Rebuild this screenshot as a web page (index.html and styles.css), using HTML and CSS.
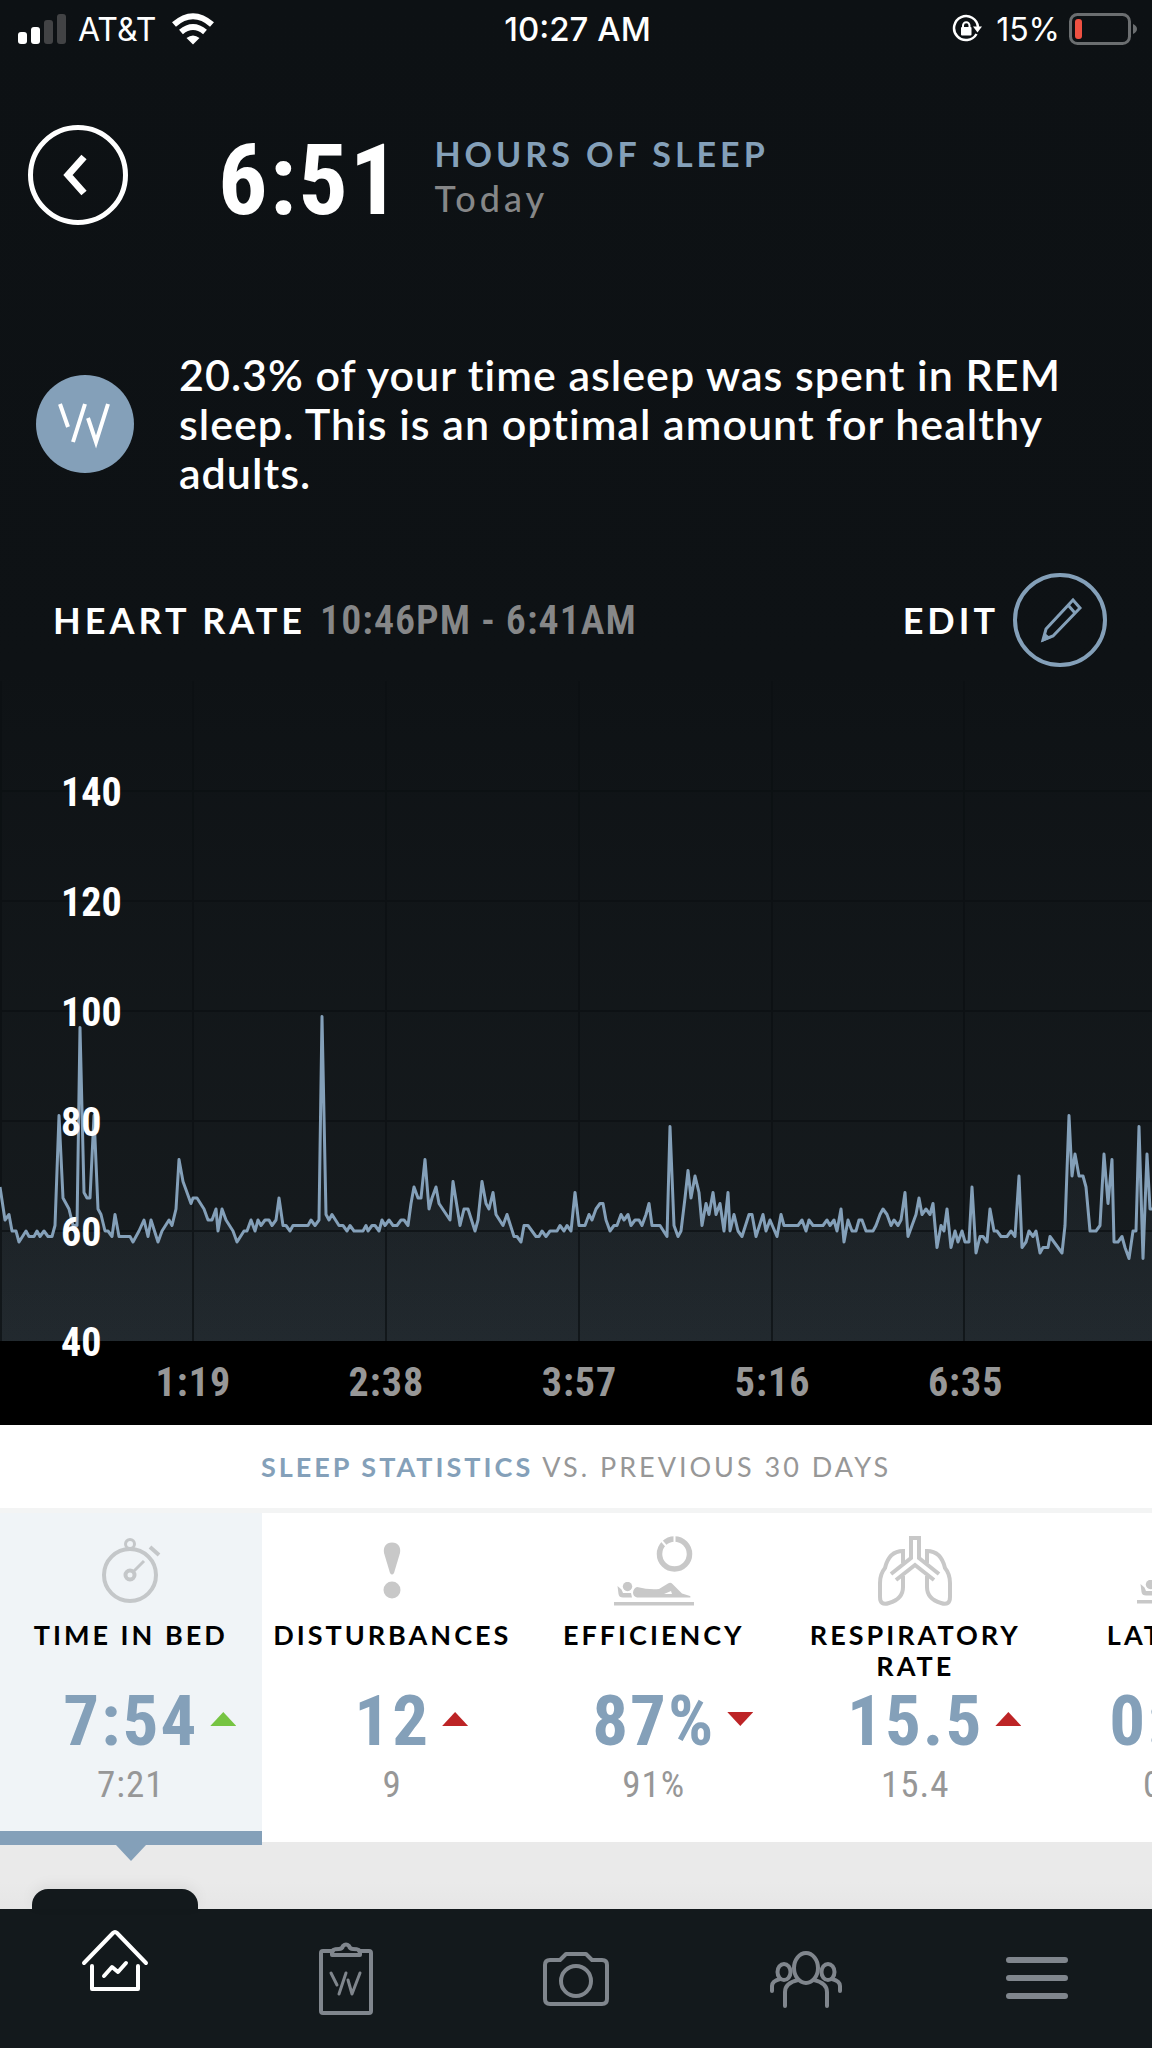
FILE: index.html
```
<!DOCTYPE html>
<html lang="en">
<head>
    <meta charset="UTF-8">
    <meta name="viewport" content="width=device-width, initial-scale=1">
    <title>Sleep</title>
    <link rel="stylesheet" href="styles.css">
</head>

<body>
    <!-- shared shapes -->
    <svg class="defs" width="0" height="0" aria-hidden="true">
        <symbol id="sleeper" viewBox="0 0 80 24">
            <circle cx="13.5" cy="4.5" r="4.7"/>
            <path d="M3.5 4L7.5 7.500L9 11H17L18 15.500H9Q5 15.500 4.500 12Z"/>
            <path fill-rule="evenodd" d="M23 5Q35 8 45 7L54 1.500Q56.500 0 58.500 2L68 11.500L76 14Q77.500 15.500 75 15.500H23Q19 14.500 19 10.500Q19.500 6 23 5ZM50 12L57 9L58 12Z"/>
            <rect x="0" y="20" width="80" height="3.500"/>
        </symbol>
    </svg>

    <div class="top">
        <div class="status">
            <div class="status-side">
                <svg width="50" height="32" viewBox="0 0 50 32">
                    <rect x="0" y="19" width="9" height="12" rx="3" fill="#fff"/>
                    <rect x="13" y="14" width="9" height="17" rx="3" fill="#fff"/>
                    <rect x="26" y="7" width="9" height="24" rx="3" fill="#424345"/>
                    <rect x="39" y="1" width="9" height="30" rx="3" fill="#424345"/>
                </svg>
                <span class="carrier">AT&amp;T</span>
                <svg width="44" height="32" viewBox="0 0 44 32" fill="none" stroke="#fff">
                    <path d="M3 11.500Q22 -5 41 11.500" stroke-width="6"/>
                    <path d="M10 19Q22 9 34 19" stroke-width="6"/>
                    <path d="M15.500 25Q22 20 28.500 25L22 31.500Z" fill="#fff" stroke="none"/>
                </svg>
            </div>
            <div class="status-time">10:27 AM</div>
            <div class="status-side right">
                <svg width="30" height="30" viewBox="0 0 30 30">
                    <path d="M24.500 20A12 12 0 1 1 26 13" fill="none" stroke="#fff" stroke-width="2.500"/>
                    <path d="M21 12.500H30L25.500 18.500Z" fill="#fff"/>
                    <rect x="9" y="13" width="10.500" height="8.500" rx="1" fill="#fff"/>
                    <path d="M11 13V11.500A3.200 3.200 0 0 1 17.500 11.500V13" fill="none" stroke="#fff" stroke-width="2"/>
                </svg>
                <span class="percent">15%</span>
                <svg width="68" height="32" viewBox="0 0 68 32">
                    <rect x="1.500" y="1.500" width="59" height="29" rx="7" fill="none" stroke="#6b6e70" stroke-width="3"/>
                    <rect x="6" y="6" width="7" height="20" rx="3" fill="#ef5142"/>
                    <path d="M64 11Q68 13 68 16Q68 19 64 21Z" fill="#6b6e70"/>
                </svg>
            </div>
        </div>

        <header class="header">
            <button class="back" aria-label="Back">
                <svg width="30" height="44" viewBox="0 0 30 44"><path d="M21 4L5 22L21 40" fill="none" stroke="#fff" stroke-width="7"/></svg>
            </button>
            <div class="hours">6:51</div>
            <div class="titles">
                <h1>HOURS OF SLEEP</h1>
                <div class="day">Today</div>
            </div>
        </header>

        <div class="insight">
            <svg class="logo" width="98" height="98" viewBox="0 0 98 98">
                <circle cx="49" cy="49" r="49" fill="#84a0b9"/>
                <path d="M24 29L32 52M49 29L37 67M52 43L60 67L72 29" fill="none" stroke="#fff" stroke-width="4"/>
            </svg>
            <p>20.3% of your time asleep was spent in REM sleep. This is an optimal amount for healthy adults.</p>
        </div>

        <div class="heart">
            <h2>HEART RATE</h2>
            <span class="range">10:46PM - 6:41AM</span>
            <button class="edit">
                EDIT
                <svg width="94" height="94" viewBox="0 0 94 94" fill="none" stroke="#84a0b9">
                    <circle cx="47" cy="47" r="45" stroke-width="4"/>
                    <path d="M30 67L33 56L60 27L67 35L40 63ZM55 32L62 40" stroke-width="3"/>
                    <path d="M29 69L32 60L38 65Z" fill="#84a0b9" stroke="none"/>
                </svg>
            </button>
        </div>

        <div class="chart">
            <svg viewBox="0 0 1152 660" preserveAspectRatio="none">
                <defs>
                    <linearGradient id="fill" x1="0" y1="0" x2="0" y2="1">
                        <stop offset="0" stop-color="#84a0b9" stop-opacity="0"/>
                        <stop offset="1" stop-color="#84a0b9" stop-opacity="0.100"/>
                    </linearGradient>
                </defs>
                <polygon id="area" fill="url(#fill)"/>
                <path d="M0 110H1152M0 220H1152M0 330H1152M0 440H1152M0 550H1152M1 0V660M193 0V660M386 0V660M579 0V660M772 0V660M964 0V660" stroke="#0c1013" stroke-opacity="0.700" stroke-width="2"/>
                <polyline id="line" fill="none" stroke="#84a0b9" stroke-width="3" stroke-linejoin="round"/>
            </svg>
            <div class="bpm">
                <span>140</span>
                <span>120</span>
                <span>100</span>
                <span>80</span>
                <span>60</span>
                <span>40</span>
            </div>
        </div>
    </div>

    <div class="times">
        <span>1:19</span>
        <span>2:38</span>
        <span>3:57</span>
        <span>5:16</span>
        <span>6:35</span>
    </div>

    <h3 class="stats-title"><b>SLEEP STATISTICS</b> VS. PREVIOUS 30 DAYS</h3>

    <div class="stats">
        <button class="card active">
            <svg class="icon" viewBox="0 0 80 72" fill="none" stroke="#c4c7c9">
                <circle cx="39" cy="40" r="26" stroke-width="4"/>
                <circle cx="39" cy="9" r="4.500" stroke-width="3"/>
                <circle cx="39" cy="40" r="4.500" stroke-width="4"/>
                <path d="M42 37L53 26" stroke-width="3"/>
                <path d="M59 12L68 20" stroke-width="4"/>
            </svg>
            <span class="label">TIME IN BED</span>
            <span class="value">7:54 <i class="up good"></i></span>
            <span class="prev">7:21</span>
        </button>
        <button class="card">
            <svg class="icon" viewBox="0 0 80 72" fill="#c8c8c8">
                <path d="M40 7.500C46 7.500 49 12 48 18L42 38Q40 41 38 38L32 18C31 12 34 7.500 40 7.500Z"/>
                <circle cx="40" cy="55" r="8.500"/>
            </svg>
            <span class="label">DISTURBANCES</span>
            <span class="value">12 <i class="up"></i></span>
            <span class="prev">9</span>
        </button>
        <button class="card">
            <svg class="icon" viewBox="0 0 80 72" fill="#c8c8c8">
                <circle cx="60.500" cy="19" r="15" fill="none" stroke="#c8c8c8" stroke-width="5.500"/>
                <path d="M60.500 10V0M53 12L46 4" stroke="#fff" stroke-width="2"/>
                <use href="#sleeper" y="47" width="80" height="24"/>
            </svg>
            <span class="label">EFFICIENCY</span>
            <span class="value">87% <i class="down"></i></span>
            <span class="prev">91%</span>
        </button>
        <button class="card">
            <svg class="icon" viewBox="0 0 80 72" fill="none" stroke="#c8c8c8" stroke-width="4">
                <path d="M16 39L36 23V3H44V23L64 39"/>
                <path d="M21 45L40 30L59 45"/>
                <path d="M28 28V16Q14 16 10 33Q5 39 5 48V62Q5 71 14 68Q28 64 28 52V41"/>
                <path d="M52 28V16Q66 16 70 33Q75 39 75 48V62Q75 71 66 68Q52 64 52 52V41"/>
            </svg>
            <span class="label">RESPIRATORY RATE</span>
            <span class="value">15.5 <i class="up"></i></span>
            <span class="prev">15.4</span>
        </button>
        <button class="card">
            <svg class="icon" viewBox="0 0 80 72" fill="#c8c8c8">
                <use href="#sleeper" y="45" width="80" height="24"/>
            </svg>
            <span class="label">LATENCY</span>
            <span class="value">0:04 <i class="up"></i></span>
            <span class="prev">0:03</span>
        </button>
    </div>

    <div class="gap"></div>

    <nav class="nav">
        <a href="#" class="current" aria-label="Home">
            <svg width="70" height="66" viewBox="0 0 70 66">
                <path d="M4 34L33 4Q35 2 37 4L66 34M12 37V60H58V37M24 47L32 38L38 43L46 34"/>
            </svg>
        </a>
        <a href="#" aria-label="Journal">
            <svg width="58" height="74" viewBox="0 0 58 74">
                <path d="M16 9H6Q4 9 4 11V69Q4 71 6 71H52Q54 71 54 69V11Q54 9 52 9H42"/>
                <path d="M15 13V10Q15 7 22 7Q25 7 26 4Q29 1 32 4Q33 7 36 7Q43 7 43 10V13Z"/>
                <path d="M14 31L20 43M29 31L22 52M31 38L35 52L43 31" stroke-width="3"/>
            </svg>
        </a>
        <a href="#" aria-label="Camera">
            <svg width="68" height="58" viewBox="0 0 68 58">
                <path d="M8 10H18L24 4H44L50 10H60Q65 10 65 15V49Q65 54 60 54H8Q3 54 3 49V15Q3 10 8 10Z"/>
                <circle cx="34" cy="31" r="15"/>
            </svg>
        </a>
        <a href="#" aria-label="Team">
            <svg width="74" height="58" viewBox="0 0 74 58">
                <ellipse cx="37" cy="18" rx="12" ry="15"/>
                <ellipse cx="15" cy="22" rx="6.500" ry="8"/>
                <ellipse cx="59" cy="22" rx="6.500" ry="8"/>
                <path d="M29 30Q16 33 16 42V56M45 30Q58 33 58 42V56M11 29Q3 31 3 36V41M63 29Q71 31 71 36V41"/>
            </svg>
        </a>
        <a href="#" aria-label="Menu">
            <svg width="64" height="46" viewBox="0 0 64 46">
                <path d="M4 4H60M4 22H60M4 40H60" stroke-width="6"/>
            </svg>
        </a>
    </nav>

    <script src="chart.js"></script>
</body>
</html>
```
FILE: styles.css
```
* {
    box-sizing: border-box;
}

body {
    margin: 0;
    min-height: 100vh;
    display: flex;
    flex-direction: column;
    background: #eaeaea;
    font-family: Lato, "Liberation Sans", sans-serif;
    color: #fff;
}

h1, h2, h3, p {
    margin: 0;
}

button {
    padding: 0;
    border: none;
    background: none;
    color: inherit;
    font: inherit;
    letter-spacing: inherit;
    cursor: pointer;
}

svg {
    display: block;
    flex: none;
}

.defs {
    position: absolute;
}

.top {
    background: linear-gradient(#0d1114, #0e1215 50%, #171c1f);
}

/* status bar */
.status {
    display: flex;
    align-items: center;
    height: 58px;
    padding: 0 15px 0 18px;
    font-family: Inter, Roboto, sans-serif;
    font-size: 32px;
}

.status-side {
    flex: 1;
    display: flex;
    align-items: center;
}

.status-side.right {
    justify-content: flex-end;
}

.carrier {
    margin: 0 15px 0 10px;
}

.percent {
    margin: 0 9px 0 14px;
}

.status-time {
    font-size: 33px;
    font-weight: 500;
}

/* header */
.header {
    display: flex;
    align-items: flex-start;
    margin-top: 67px;
    padding: 0 28px;
}

.back {
    display: flex;
    align-items: center;
    justify-content: center;
    width: 100px;
    height: 100px;
    border: 5px solid #fff;
    border-radius: 50%;
}

.hours {
    margin: 0 33px 0 90px;
    font: bold 98px/112px "Roboto Condensed", Roboto, sans-serif;
    letter-spacing: 2px;
}

.titles {
    margin-top: 7px;
    font-size: 36px;
    line-height: 44px;
    letter-spacing: 4px;
}

.titles h1 {
    font-size: 34px;
    font-weight: bold;
    color: #84a0b9;
}

.day {
    font-weight: 500;
    color: #868788;
}

/* insight */
.insight {
    display: flex;
    align-items: center;
    gap: 45px;
    margin-top: 113px;
    padding: 0 60px 0 36px;
    font-size: 43px;
    font-weight: 600;
    line-height: 49px;
    letter-spacing: 1px;
}

/* heart rate */
.heart {
    display: flex;
    align-items: center;
    margin-top: 76px;
    padding: 0 45px 0 53px;
    font-size: 36px;
    letter-spacing: 4px;
}

.heart h2 {
    font-size: 36px;
    font-weight: bold;
}

.range {
    margin-left: 14px;
    font: 600 40px "Roboto Condensed", Roboto, sans-serif;
    letter-spacing: 1px;
    color: #868788;
}

.edit {
    display: flex;
    align-items: center;
    gap: 14px;
    margin-left: auto;
    font-weight: bold;
}

.chart {
    position: relative;
    margin-top: 14px;
}

.chart svg {
    width: 100%;
    height: 660px;
}

.bpm {
    position: absolute;
    left: 61px;
    bottom: -57px;
    display: flex;
    flex-direction: column;
    font: bold 40px/110px "Roboto Condensed", Roboto, sans-serif;
}

.times {
    display: flex;
    padding-left: 8.400%;
    background: #000;
    font: bold 40px/84px "Roboto Condensed", Roboto, sans-serif;
    letter-spacing: 1px;
    color: #979797;
}

.times span {
    width: 18.300%;
    text-align: center;
}

/* statistics */
.stats-title {
    border-bottom: 5px solid #f3f4f4;
    background: #fff;
    font-size: 27px;
    font-weight: normal;
    line-height: 83px;
    letter-spacing: 3px;
    text-align: center;
    color: #979797;
}

.stats-title b {
    color: #84a0b9;
}

.stats {
    display: flex;
    overflow-x: clip;
    background: #fff;
}

.card {
    position: relative;
    flex: none;
    width: 22.700%;
    padding: 22px 8px 32px;
    display: flex;
    flex-direction: column;
    align-items: center;
    color: #000;
}

.icon {
    width: 80px;
    height: 72px;
}

.label {
    height: 75px;
    padding-top: 12px;
    font-size: 27px;
    font-weight: bold;
    line-height: 31px;
    letter-spacing: 3px;
}

.value {
    display: grid;
    grid-template-columns: 1fr auto 1fr;
    align-items: center;
    align-self: stretch;
    font: bold 71px/78px "Roboto Condensed", Roboto, sans-serif;
    letter-spacing: 2px;
    color: #84a0b9;
}

.value::before {
    content: "";
}

.value i {
    width: 26px;
    height: 14px;
    margin: 0 0 4px 12px;
    background: #bd2426;
}

.up {
    clip-path: polygon(50% 0, 100% 100%, 0 100%);
}

.down {
    clip-path: polygon(0 0, 100% 0, 50% 100%);
}

.value .good {
    background: #76c442;
}

.prev {
    font: 37px/50px "Roboto Condensed", Roboto, sans-serif;
    letter-spacing: 1px;
    color: #979797;
}

.active {
    background: #f0f4f7;
}

.active::before {
    content: "";
    position: absolute;
    left: 0;
    right: 0;
    bottom: -3px;
    height: 14px;
    background: #84a0b9;
}

.active::after {
    content: "";
    position: absolute;
    left: 50%;
    bottom: -19px;
    margin-left: -15px;
    border: 15px solid transparent;
    border-top: 16px solid #84a0b9;
    border-bottom: none;
}

.gap {
    flex: 1;
    min-height: 60px;
    background: linear-gradient(#eaeaea 60%, #e6e6e6);
}

/* bottom tabs */
.nav {
    display: flex;
    height: 139px;
    background: #13191c;
}

.nav a {
    flex: 1;
    display: flex;
    align-items: center;
    justify-content: center;
    position: relative;
}

.nav svg {
    fill: none;
    stroke: #80868d;
    stroke-width: 4;
    stroke-linecap: round;
    stroke-linejoin: round;
}

.nav .current {
    padding-bottom: 34px;
}

.nav .current svg {
    stroke: #fff;
}

.current::before {
    content: "";
    position: absolute;
    top: -20px;
    left: 32px;
    right: 32px;
    height: 20px;
    border-radius: 16px 16px 0 0;
    background: #13191c;
    box-shadow: 0 -4px 14px rgba(0, 0, 0, 0.060);
}
```
FILE: chart.js
```
// [x, bpm] for every turn of the line
const readings = [
    [0,68],[5,62],[9,63],[12,60],[16,60],[19,58],[26,60],[29,59],[34,59],[37,60],[40,59],[44,60],[48,59],[52,59],[55,61],
    [59,81],[63,66],[69,64],[73,61],[77,61],[80,97],[84,67],[87,66],[90,66],[94,81],[98,64],[101,63],[105,60],[108,60],
    [112,59],[115,63],[119,59],[130,59],[133,58],[139,60],[144,62],[148,59],[151,62],[158,58],[162,60],[169,62],[172,61],
    [176,64],[179,73],[183,69],[191,65],[193,66],[197,66],[204,64],[208,62],[212,62],[216,64],[218,60],[222,64],[226,62],
    [233,60],[237,58],[244,60],[247,60],[251,62],[255,60],[258,62],[261,61],[265,62],[269,62],[272,61],[276,62],[279,66],
    [283,61],[286,61],[290,60],[293,61],[308,61],[311,62],[315,61],[319,62],[322,99],[326,63],[329,62],[332,63],[339,61],
    [343,61],[347,60],[350,61],[354,60],[363,60],[366,61],[368,60],[372,61],[375,61],[379,60],[382,62],[385,61],[389,62],
    [393,61],[397,61],[401,62],[404,62],[408,61],[411,65],[414,68],[418,66],[421,66],[425,73],[429,64],[432,66],[436,68],
    [439,65],[450,62],[453,69],[460,61],[464,64],[468,64],[475,60],[478,62],[482,69],[486,65],[489,64],[493,67],[496,63],
    [503,61],[507,63],[514,59],[517,59],[521,58],[524,61],[528,61],[536,59],[539,59],[542,60],[546,59],[550,60],[557,60],
    [560,61],[564,60],[567,61],[571,60],[575,67],[579,61],[585,61],[589,63],[592,62],[596,64],[600,65],[603,65],[606,62],
    [610,60],[614,61],[617,61],[621,63],[624,62],[628,63],[631,61],[635,62],[639,62],[642,61],[646,63],[649,65],[652,61],
    [660,61],[667,59],[670,79],[674,61],[678,59],[681,60],[685,66],[688,71],[691,66],[695,70],[699,67],[702,61],[706,65],
    [709,63],[713,67],[716,63],[720,65],[724,60],[728,67],[730,60],[734,63],[738,60],[742,59],[749,63],[752,63],[756,59],
    [763,63],[766,60],[770,62],[777,59],[781,63],[784,61],[798,61],[802,62],[806,60],[809,62],[813,61],[823,61],[827,62],
    [830,61],[834,62],[837,60],[841,64],[844,58],[848,62],[852,60],[856,60],[859,62],[862,62],[866,60],[873,60],[876,61],
    [880,63],[883,64],[887,63],[891,61],[894,62],[898,61],[901,62],[905,67],[908,59],[916,63],[919,66],[922,63],[926,64],
    [930,63],[933,65],[937,57],[941,61],[944,60],[947,64],[951,57],[955,60],[958,58],[962,60],[965,58],[969,58],[972,68],
    [976,56],[980,59],[983,59],[987,58],[990,64],[994,60],[997,60],[1001,59],[1007,59],[1011,60],[1015,59],[1019,70],
    [1022,57],[1026,58],[1029,60],[1033,59],[1036,60],[1040,56],[1043,57],[1048,57],[1050,59],[1062,56],[1065,61],
    [1069,81],[1072,70],[1075,74],[1079,70],[1083,70],[1086,68],[1090,60],[1096,60],[1100,61],[1104,74],[1108,65],
    [1112,73],[1114,58],[1118,58],[1122,59],[1125,57],[1129,55],[1133,60],[1136,60],[1139,79],[1143,55],[1147,74],
    [1150,64],[1152,64]
];

// 5.5px for each beat, 40 bpm sits on the bottom edge
const points = readings.map(r => r[0] + ',' + (660 - (r[1] - 40) * 5.5)).join(' ');

document.getElementById('line').setAttribute('points', points);
document.getElementById('area').setAttribute('points', '0,660 ' + points + ' 1152,660');
```
